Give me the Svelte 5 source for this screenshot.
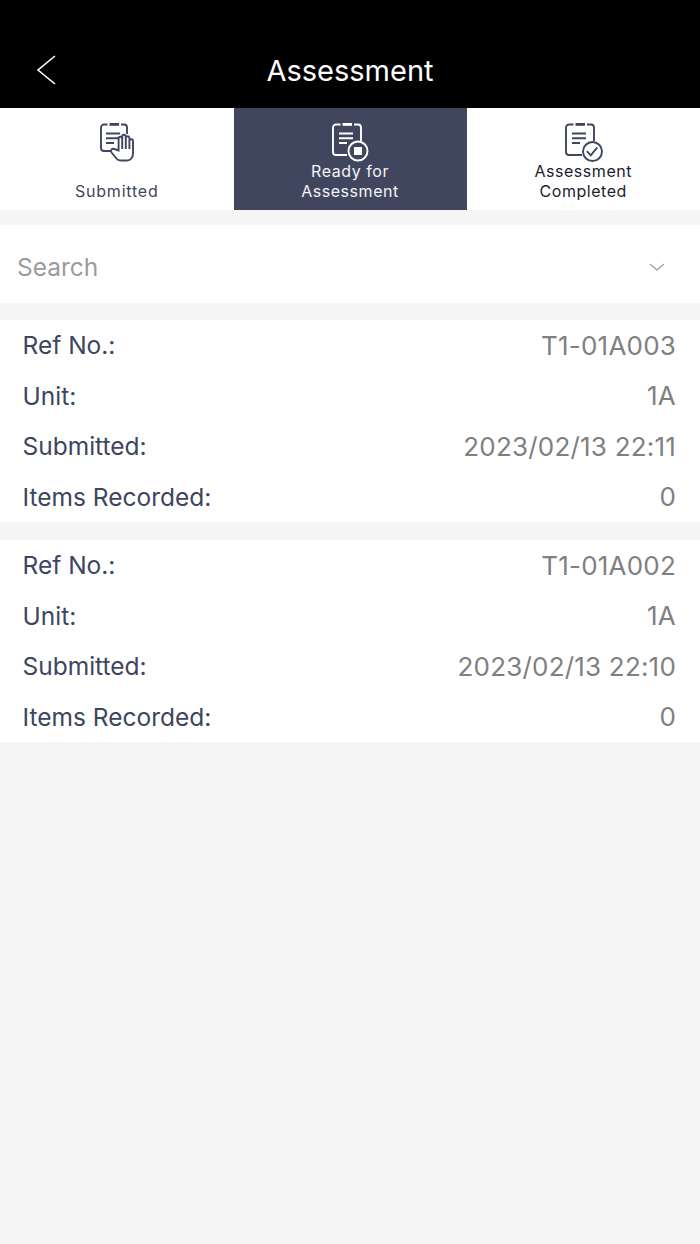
<script lang="ts">
	const records = [
		{ ref: 'T1-01A003', unit: '1A', submitted: '2023/02/13 22:11', items: 0 },
		{ ref: 'T1-01A002', unit: '1A', submitted: '2023/02/13 22:10', items: 0 }
	];
</script>

{#snippet lines()}
	<rect class="clip" x="17.5" y="5" width="9.5" height="2.8" />
	<path d="M14 15.5h14M14 20.2h14M14 25h8" />
{/snippet}

<div class="page">
	<header class="topbar">
		<button class="back" type="button" aria-label="Back">
			<svg width="22" height="32" viewBox="0 0 22 32"><path d="M20 2 3 16l17 14" /></svg>
		</button>
		<h1>Assessment</h1>
	</header>

	<nav class="tabs">
		<div class="tab">
			<svg class="icon" width="50" height="48" viewBox="0 0 50 48">
				<path d="M15.5 6.5H12a3 3 0 0 0-3 3V30a3 3 0 0 0 3 3h7" />
				<path d="M29 6.5h3a3 3 0 0 1 3 3V16" />
				{@render lines()}
				<path class="hand" d="M26.6 32.5 22.5 31c-2.5-1-4.5 1.5-3 3.5l5 6c1 1.5 2 2 4 2H35c3.5 0 6-3 6-7V23a1.8 1.8 0 0 0-3.6 0v-3a1.8 1.8 0 0 0-3.6 0v-1.5a1.8 1.8 0 0 0-3.6 0v2a1.8 1.8 0 0 0-3.6 0Z" />
				<path d="M30.2 19v12M33.8 20v11M37.4 23v8" />
			</svg>
			<span class="tab-label submitted">Submitted</span>
		</div>
		<div class="tab active">
			<svg class="icon" width="50" height="48" viewBox="0 0 50 48">
				<path d="M15.5 6.5H11a3 3 0 0 0-3 3V34a3 3 0 0 0 3 3h11" />
				<path d="M29 6.5h4a3 3 0 0 1 3 3V23" />
				{@render lines()}
				<circle cx="33" cy="33" r="9.5" />
				<rect class="stop" x="29" y="29" width="8" height="8" />
			</svg>
			<span class="tab-label">Ready for<br />Assessment</span>
		</div>
		<div class="tab">
			<svg class="icon" width="50" height="48" viewBox="0 0 50 48">
				<path d="M15.5 6.5H11a3 3 0 0 0-3 3V34a3 3 0 0 0 3 3h13" />
				<path d="M29 6.5h4a3 3 0 0 1 3 3V23" />
				{@render lines()}
				<circle cx="34.5" cy="33.5" r="9.5" />
				<path d="m28.8 33.2 4 4.2 6.5-8" />
			</svg>
			<span class="tab-label">Assessment<br />Completed</span>
		</div>
	</nav>

	<div class="search">
		<span>Search</span>
		<svg width="16" height="8" viewBox="0 0 16 8"><path d="M1 1l7 6 7-6" /></svg>
	</div>

	<main class="list">
		{#each records as r}
			<section class="card">
				<div class="row"><span>Ref No.:</span><span class="val">{r.ref}</span></div>
				<div class="row"><span>Unit:</span><span class="val">{r.unit}</span></div>
				<div class="row"><span>Submitted:</span><span class="val">{r.submitted}</span></div>
				<div class="row"><span>Items Recorded:</span><span class="val">{r.items}</span></div>
			</section>
		{/each}
	</main>
</div>

<style>
	:global(body) {
		margin: 0;
		background: #f5f5f5;
	}

	.page {
		min-height: 1244px;
		background: #f5f5f5;
		font-family: Inter, 'Liberation Sans', sans-serif;
	}

	.topbar {
		position: relative;
		height: 108px;
		background: #000;
		color: #fff;
		display: flex;
		align-items: flex-end;
		justify-content: center;
	}

	.topbar h1 {
		margin: 0 0 19px;
		font-size: 29px;
		line-height: 36px;
		font-weight: 400;
	}

	.back {
		position: absolute;
		left: 35px;
		top: 54px;
		padding: 0;
		border: none;
		background: none;
		display: flex;
	}

	.back path {
		fill: none;
		stroke: #fff;
		stroke-width: 1.6;
	}

	.tabs {
		height: 102px;
		display: grid;
		grid-template-columns: 233.5px 233px 233.5px;
		background: #fff;
	}

	.tab {
		display: flex;
		flex-direction: column;
		align-items: center;
		color: #1e2130;
		--ink: #41465f;
		--paper: #fff;
		padding-top: 10px;
	}

	.tab.active {
		background: #41465f;
		color: #f4f4f6;
		--ink: #fff;
		--paper: #41465f;
	}

	.icon {
		display: block;
		margin-bottom: -5px;
		flex: none;
	}

	.icon circle {
		fill: none;
		stroke: var(--ink);
		stroke-width: 1.9;
	}

	.icon .stop {
		fill: var(--ink);
	}

	.tab :global(.clip) {
		fill: var(--ink);
	}

	.tab :global(path) {
		fill: none;
		stroke: var(--ink);
		stroke-width: 1.9;
	}

	.tab :global(path.hand) {
		fill: var(--paper);
	}

	.tab-label {
		font-size: 16px;
		line-height: 20px;
		text-align: center;
		letter-spacing: 0.55px;
	}

	.tab-label.submitted {
		color: #41465f;
		margin-top: 20px;
		letter-spacing: 0.8px;
	}

	.search {
		margin-top: 15px;
		height: 78px;
		box-sizing: border-box;
		padding: 6px 35px 0 17px;
		background: #fff;
		display: flex;
		align-items: center;
		justify-content: space-between;
		color: #9b9b9b;
		font-size: 24.5px;
	}

	.search path {
		fill: none;
		stroke: #9b9b9b;
		stroke-width: 1.2;
	}

	.list {
		margin-top: 17px;
		display: flex;
		flex-direction: column;
		gap: 18px;
	}

	.card {
		background: #fff;
		padding: 0 24px 0 22.5px;
	}

	.row {
		height: 50.5px;
		display: flex;
		align-items: center;
		justify-content: space-between;
		font-size: 24.5px;
		color: #3d4560;
	}

	.val {
		color: #808080;
		font-size: 26px;
		letter-spacing: 0.2px;
	}
</style>
